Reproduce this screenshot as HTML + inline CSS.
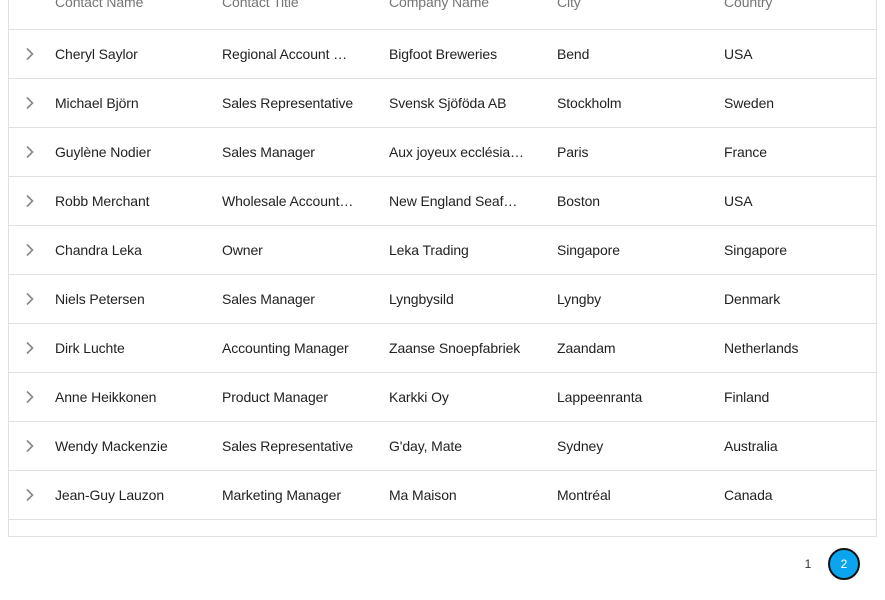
<!DOCTYPE html>
<html><head><style>
body{margin:0;width:885px;height:600px;overflow:hidden;background:#fff;font-family:"Liberation Sans",sans-serif;font-size:14px;color:#222;}
.t{position:absolute;left:8px;top:-19px;width:867px;height:555px;border:1px solid #e0e0e0;border-top:none;}
.r{position:absolute;left:0;width:867px;height:48px;border-bottom:1px solid #e0e0e0;}
.c{position:absolute;top:0;line-height:48px;white-space:nowrap;overflow:hidden;text-overflow:ellipsis;width:135px;letter-spacing:-0.1px;}
.h .c{color:#757575;}
.ch{position:absolute;left:16px;top:17px;}
</style></head><body>
<div class="t">
<div class="r h" style="top:0"><div class="c" style="left:46px;line-height:42px">Contact Name</div><div class="c" style="left:213px;line-height:42px">Contact Title</div><div class="c" style="left:380px;line-height:42px">Company Name</div><div class="c" style="left:548px;line-height:42px">City</div><div class="c" style="left:715px;line-height:42px">Country</div></div>
</div>
<div style="position:absolute;left:799px;top:557px;width:18px;text-align:center;font-size:12px;color:#333">1</div>
<div style="position:absolute;left:828px;top:548px;width:28px;height:28px;border:2px solid #111;border-radius:50%;background:#0ba4ef;color:#fff;font-size:12px;text-align:center;line-height:28px">2</div>
<script>
var d=[["Cheryl Saylor","Regional Account R…","Bigfoot Breweries","Bend","USA"],["Michael Björn","Sales Representative","Svensk Sjöföda AB","Stockholm","Sweden"],["Guylène Nodier","Sales Manager","Aux joyeux ecclésia…","Paris","France"],["Robb Merchant","Wholesale Account …","New England Seafo…","Boston","USA"],["Chandra Leka","Owner","Leka Trading","Singapore","Singapore"],["Niels Petersen","Sales Manager","Lyngbysild","Lyngby","Denmark"],["Dirk Luchte","Accounting Manager","Zaanse Snoepfabriek","Zaandam","Netherlands"],["Anne Heikkonen","Product Manager","Karkki Oy","Lappeenranta","Finland"],["Wendy Mackenzie","Sales Representative","G'day, Mate","Sydney","Australia"],["Jean-Guy Lauzon","Marketing Manager","Ma Maison","Montréal","Canada"]];
var x=[46,213,380,548,715],h="";
d.forEach(function(r,i){h+='<div class="r" style="top:'+(49+49*i)+'px"><svg class="ch" width="10" height="14" viewBox="0 0 10 14"><path d="M2 1.5 L7.5 7 L2 12.5" fill="none" stroke="#888" stroke-width="1.6"/></svg>';r.forEach(function(v,j){h+='<div class="c" style="left:'+x[j]+'px">'+v+'</div>'});h+='</div>'});
document.querySelector('.t').insertAdjacentHTML('beforeend',h);
</script>
</body></html>
